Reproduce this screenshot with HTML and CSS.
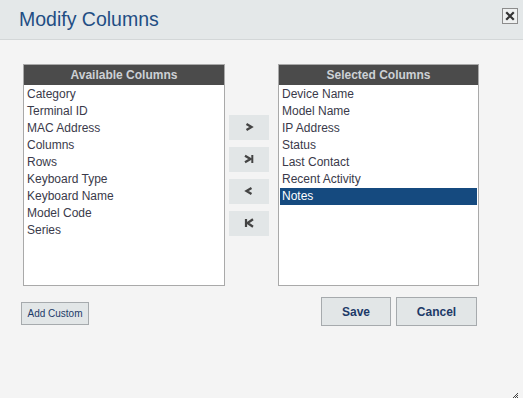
FILE: index.html
```html
<!DOCTYPE html>
<html lang="en">
<head>
    <meta charset="UTF-8">
    <title>Modify Columns</title>
    <link rel="stylesheet" href="styles.css">
</head>
<body>
    <div class="dialog">
        <div class="dialog-header">
            <h1 class="dialog-title">Modify Columns</h1>
            <button class="close-btn" title="Close">
                <svg width="10" height="10" viewBox="0 0 10 10">
                    <path d="M2 2 L8 8 M8 2 L2 8" stroke="#333" stroke-width="2.2" stroke-linecap="square"/>
                </svg>
            </button>
        </div>

        <div class="dialog-body">
            <div class="picker">
                <!-- Columns not shown yet -->
                <div class="col-panel available">
                    <div class="col-head">Available Columns</div>
                    <ul class="col-list">
                        <li>Category</li>
                        <li>Terminal ID</li>
                        <li>MAC Address</li>
                        <li>Columns</li>
                        <li>Rows</li>
                        <li>Keyboard Type</li>
                        <li>Keyboard Name</li>
                        <li>Model Code</li>
                        <li>Series</li>
                    </ul>
                </div>

                <!-- Move buttons -->
                <div class="move-btns">
                    <button class="move-btn" title="Add">
                        <svg width="10" height="10" viewBox="0 0 10 10"><path d="M2.5 2 L7.5 5 L2.5 8" fill="none" stroke="#444" stroke-width="2.3"/></svg>
                    </button>
                    <button class="move-btn" title="Add all">
                        <svg width="10" height="10" viewBox="0 0 10 10"><path d="M1 1.8 L6.5 5 L1 8.2" fill="none" stroke="#444" stroke-width="2.3"/><path d="M8.3 1 V9" stroke="#444" stroke-width="2"/></svg>
                    </button>
                    <button class="move-btn" title="Remove">
                        <svg width="10" height="10" viewBox="0 0 10 10"><path d="M7.5 2 L2.5 5 L7.5 8" fill="none" stroke="#444" stroke-width="2.3"/></svg>
                    </button>
                    <button class="move-btn" title="Remove all">
                        <svg width="10" height="10" viewBox="0 0 10 10"><path d="M2 1 V9" stroke="#444" stroke-width="2.2"/><path d="M9 1.3 L3.5 5 L9 8.7" fill="none" stroke="#444" stroke-width="2.3"/></svg>
                    </button>
                </div>

                <!-- Columns in the grid -->
                <div class="col-panel selected">
                    <div class="col-head">Selected Columns</div>
                    <ul class="col-list">
                        <li>Device Name</li>
                        <li>Model Name</li>
                        <li>IP Address</li>
                        <li>Status</li>
                        <li>Last Contact</li>
                        <li>Recent Activity</li>
                        <li class="active">Notes</li>
                    </ul>
                </div>
            </div>

            <div class="dialog-footer">
                <button class="btn btn-small">Add Custom</button>
                <div class="actions">
                    <button class="btn btn-main save">Save</button>
                    <button class="btn btn-main cancel">Cancel</button>
                </div>
            </div>
        </div>

        <div class="resize-grip">
            <svg width="8" height="8" viewBox="0 0 8 8">
                <path d="M7 1 L1 7 M7 3 L3 7 M7 5 L5 7" stroke="#444" stroke-width="1"/>
            </svg>
        </div>
    </div>
</body>
</html>
```

FILE: styles.css
```css
/* Page */
html, body {
    margin: 0;
    height: 100%;
}

body {
    background: #f4f4f4;
    font-family: "Liberation Sans", Arial, sans-serif;
    color: #3a3a4a;
}

button {
    font-family: inherit;
    padding: 0;
    cursor: pointer;
}

.dialog {
    position: relative;
    height: 100vh;
}

/* Header */
.dialog-header {
    height: 39px;
    background: #e4e8e9;
    border-bottom: 1px solid #d3d7d8;
    display: flex;
    align-items: center;
    justify-content: space-between;
    padding: 0 5px 0 19px;
}

.dialog-title {
    margin: 0;
    font-size: 19.5px;
    font-weight: normal;
    color: #1f4e84;
}

.close-btn {
    align-self: flex-start;
    margin-top: 8px;
    width: 16px;
    height: 16px;
    background: #eef0f0;
    border: 1px solid #8c8c8c;
    display: flex;
    align-items: center;
    justify-content: center;
}

/* Body */
.dialog-body {
    padding: 24px 0 0 23px;
}

.picker {
    display: flex;
    align-items: center;
}

.col-panel {
    box-sizing: border-box;
    height: 222px;
    background: #fff;
    border: 1px solid #a9a9a9;
}

.available { width: 202px; }
.selected { width: 201px; }

.col-head {
    height: 20px;
    line-height: 20px;
    background: #4b4b4b;
    color: #cdd1d5;
    font-size: 12px;
    font-weight: bold;
    text-align: center;
}

.col-list {
    list-style: none;
    margin: 0;
    padding: 1px;
    font-size: 12px;
}

.col-list li {
    height: 17px;
    line-height: 17px;
    padding-left: 2px;
}

.col-list li.active {
    background: #154a7f;
    color: #fff;
}

.move-btns {
    display: flex;
    flex-direction: column;
    gap: 7px;
    margin: 0 9px 0 4px;
}

.move-btn {
    width: 40px;
    height: 25px;
    background: #e2e6e7;
    border: none;
    display: flex;
    align-items: center;
    justify-content: center;
}

/* Footer */
.dialog-footer {
    display: flex;
    align-items: flex-start;
    margin: 11px 0 0 -2px;
    padding-right: 46px;
}

.btn {
    background: #e2e6e7;
    border: 1px solid #a6aaad;
    color: #1d3a68;
}

.btn-small {
    margin-top: 5px;
    width: 68px;
    height: 23px;
    font-size: 10px;
}

.actions {
    margin-left: auto;
    display: flex;
    gap: 5px;
}

.btn-main {
    height: 29px;
    font-size: 12px;
    font-weight: bold;
}

.save { width: 70px; }
.cancel { width: 81px; }

.resize-grip {
    position: absolute;
    right: 4px;
    bottom: 4px;
    width: 8px;
    height: 8px;
}
```
